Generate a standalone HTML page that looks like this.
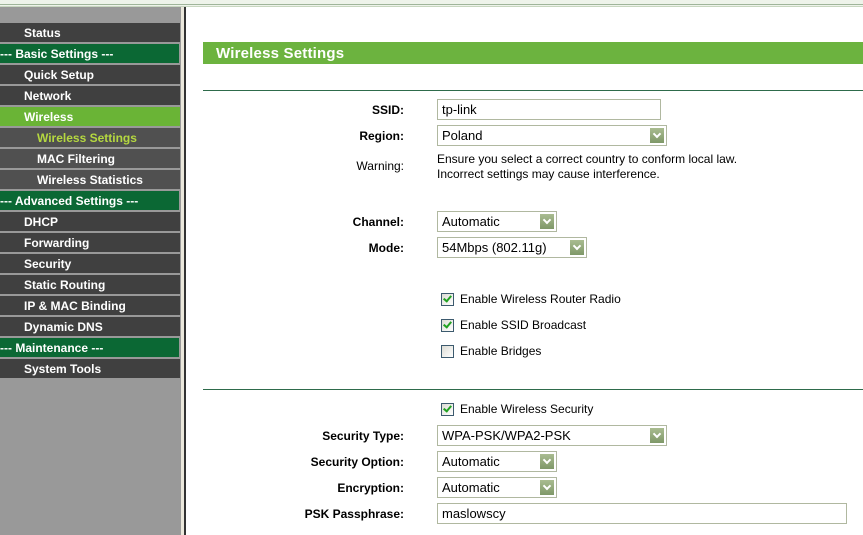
<!DOCTYPE html>
<html><head><style>
*{margin:0;padding:0;box-sizing:border-box}
body{width:863px;height:535px;overflow:hidden;background:#fff;font-family:"Liberation Sans",Arial,sans-serif;position:relative}
.a{position:absolute}
.top{left:0;top:0;width:863px;height:7px;background:#eef3ea;border-bottom:1px solid #c8d6c0}
.top2{left:0;top:4px;width:863px;height:1px;background:#9fb59a}
.side{left:0;top:7px;width:181px;height:528px;background:#999}
.it{position:absolute;left:0;width:180px;height:19px;background:#404040;color:#fff;font-weight:bold;font-size:12px;line-height:20px;padding-left:24px}
.sub{padding-left:37px;background:#505050}
.hd{background:#0b6834;padding-left:0;width:179px}
.act{background:#6ab436}
.strip{left:181px;top:7px;width:3px;height:528px;background:#ebe8dc}
.vl{left:184px;top:7px;width:2px;height:528px;background:#333}
.bar{left:203px;top:42px;width:660px;height:22px;background:#6cb33f;color:#fff;font-weight:bold;font-size:15px;line-height:23px;padding-left:13px;letter-spacing:0.2px}
.hl{left:203px;width:660px;height:1px;background:#2e6b4b}
.lb{position:absolute;right:459px;font-size:12px;font-weight:bold;color:#000;text-align:right;white-space:nowrap}
.in{position:absolute;left:437px;height:21px;border:1px solid #b0b8a0;background:#fff;font-size:13px;line-height:19px;padding-left:4px;color:#000}
.sel::after{content:"";position:absolute;right:2px;top:2px;width:14px;height:15px;background:linear-gradient(#a9bc90,#7f9868)}
.sel::before{content:"";position:absolute;right:6px;top:5px;width:4px;height:4px;border-right:2px solid #fff;border-bottom:2px solid #fff;transform:rotate(45deg);z-index:2}
.tx{position:absolute;font-size:12px;color:#000}
.cb{position:absolute;left:441px;width:13px;height:13px;border:1px solid #3c5a6e;background:linear-gradient(135deg,#dcdcd4,#fff)}
.ck{position:absolute;left:3px;top:0px;width:5px;height:8px;border-right:2px solid #21a121;border-bottom:2px solid #21a121;transform:rotate(40deg)}
</style></head><body>
<div class="a top"></div><div class="a top2"></div>
<div class="a side">
<div class="it" style="top:16px">Status</div>
<div class="it hd" style="top:37px">--- Basic Settings ---</div>
<div class="it" style="top:58px">Quick Setup</div>
<div class="it" style="top:79px">Network</div>
<div class="it act" style="top:100px">Wireless</div>
<div class="it sub" style="top:121px;color:#b5d840">Wireless Settings</div>
<div class="it sub" style="top:142px">MAC Filtering</div>
<div class="it sub" style="top:163px">Wireless Statistics</div>
<div class="it hd" style="top:184px">--- Advanced Settings ---</div>
<div class="it" style="top:205px">DHCP</div>
<div class="it" style="top:226px">Forwarding</div>
<div class="it" style="top:247px">Security</div>
<div class="it" style="top:268px">Static Routing</div>
<div class="it" style="top:289px">IP &amp; MAC Binding</div>
<div class="it" style="top:310px">Dynamic DNS</div>
<div class="it hd" style="top:331px">--- Maintenance ---</div>
<div class="it" style="top:352px">System Tools</div>
</div>
<div class="a strip"></div><div class="a vl"></div>
<div class="a bar">Wireless Settings</div>
<div class="a hl" style="top:90px"></div>
<div class="a hl" style="top:389px"></div>

<div class="lb" style="top:103px">SSID:</div>
<div class="in" style="top:99px;width:224px">tp-link</div>
<div class="lb" style="top:129px">Region:</div>
<div class="in sel" style="top:125px;width:230px">Poland</div>
<div class="lb" style="top:159px;font-weight:normal">Warning:</div>
<div class="tx" style="left:437px;top:152px;line-height:15px">Ensure you select a correct country to conform local law.<br>Incorrect settings may cause interference.</div>
<div class="lb" style="top:215px">Channel:</div>
<div class="in sel" style="top:211px;width:120px">Automatic</div>
<div class="lb" style="top:241px">Mode:</div>
<div class="in sel" style="top:237px;width:150px">54Mbps (802.11g)</div>

<div class="cb" style="top:293px"><div class="ck"></div></div><div class="tx" style="left:460px;top:292px">Enable Wireless Router Radio</div>
<div class="cb" style="top:319px"><div class="ck"></div></div><div class="tx" style="left:460px;top:318px">Enable SSID Broadcast</div>
<div class="cb" style="top:345px"></div><div class="tx" style="left:460px;top:344px">Enable Bridges</div>
<div class="cb" style="top:403px"><div class="ck"></div></div><div class="tx" style="left:460px;top:402px">Enable Wireless Security</div>

<div class="lb" style="top:429px">Security Type:</div>
<div class="in sel" style="top:425px;width:230px">WPA-PSK/WPA2-PSK</div>
<div class="lb" style="top:455px">Security Option:</div>
<div class="in sel" style="top:451px;width:120px">Automatic</div>
<div class="lb" style="top:481px">Encryption:</div>
<div class="in sel" style="top:477px;width:120px">Automatic</div>
<div class="lb" style="top:507px">PSK Passphrase:</div>
<div class="in" style="top:503px;width:410px">maslowscy</div>
</body></html>
